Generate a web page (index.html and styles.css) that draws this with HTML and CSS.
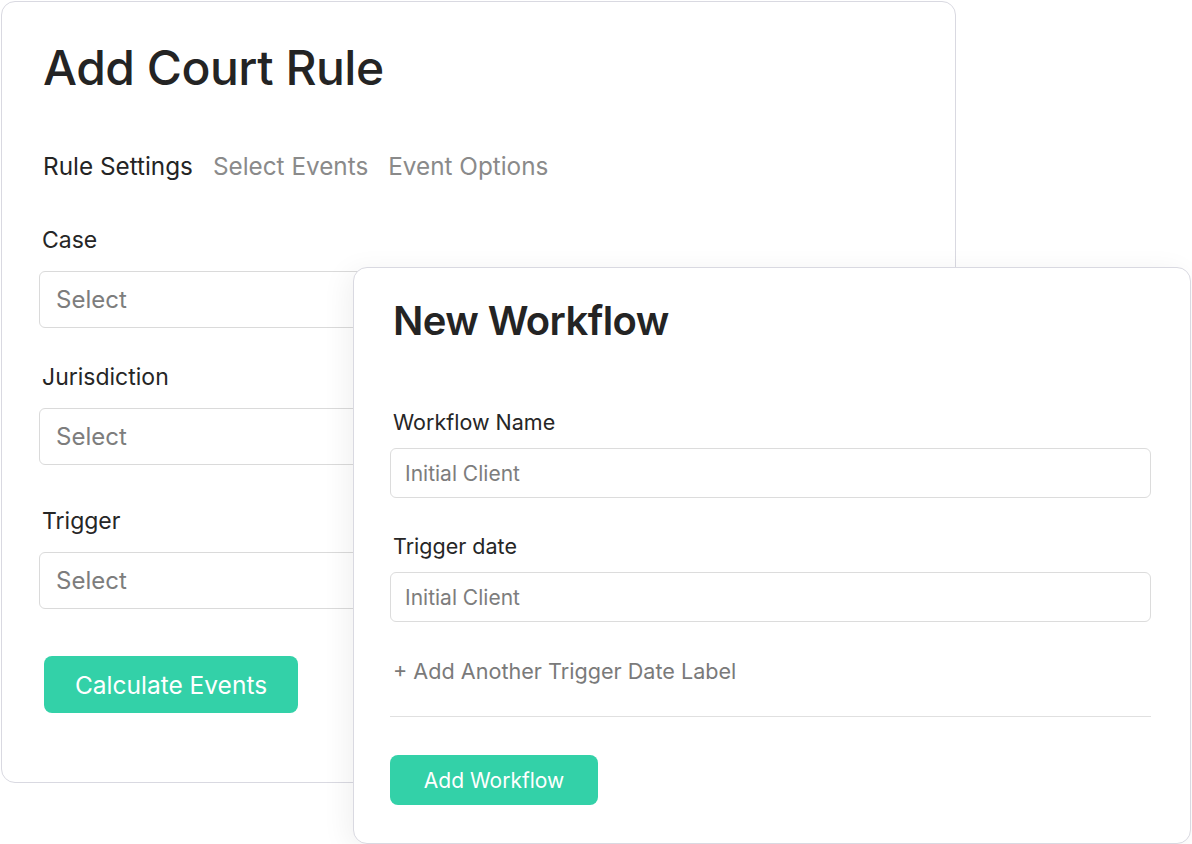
FILE: index.html
```html
<!DOCTYPE html>
<html>
<head>
<meta charset="utf-8">
<link rel="stylesheet" href="styles.css">
</head>
<body>
<div class="canvas">
  <section class="card card-rule">
    <h1 class="rule-title">Add Court Rule</h1>
    <nav class="tabs">
      <span class="tab active">Rule Settings</span>
      <span class="tab">Select Events</span>
      <span class="tab">Event Options</span>
    </nav>
    <div class="field f-case">
      <label class="lbl">Case</label>
      <div class="select">Select</div>
    </div>
    <div class="field f-jur">
      <label class="lbl">Jurisdiction</label>
      <div class="select">Select</div>
    </div>
    <div class="field f-trig">
      <label class="lbl">Trigger</label>
      <div class="select">Select</div>
    </div>
    <button class="btn btn-calc">Calculate Events</button>
  </section>

  <section class="card card-flow">
    <h2 class="flow-title">New Workflow</h2>
    <div class="wf-field wf-name">
      <label class="wf-lbl">Workflow Name</label>
      <div class="wf-input">Initial Client</div>
    </div>
    <div class="wf-field wf-date">
      <label class="wf-lbl">Trigger date</label>
      <div class="wf-input">Initial Client</div>
    </div>
    <div class="add-link">+ Add Another Trigger Date Label</div>
    <hr class="divider">
    <button class="btn btn-add">Add Workflow</button>
  </section>
</div>
</body>
</html>
```

FILE: styles.css
```css
* { box-sizing: border-box; }
html, body {
  margin: 0;
  padding: 0;
  background: #ffffff;
}
body {
  font-family: Inter, "Noto Sans", "Liberation Sans", sans-serif;
  color: #262626;
  width: 1192px;
  height: 844px;
  overflow: hidden;
}
.canvas {
  position: relative;
  width: 1192px;
  height: 844px;
}
.card {
  background: #ffffff;
  border: 1.5px solid #d9d9e1;
  border-radius: 14px;
}
.card-rule {
  margin: 1px 0 0 1px;
  width: 955px;
  height: 782px;
  padding: 37px 0 0 37px;
  display: flex;
  flex-direction: column;
  align-items: flex-start;
}
.rule-title {
  margin: 0 0 0 4px;
  font-size: 48px;
  line-height: 58px;
  font-weight: 500;
  letter-spacing: -0.5px;
  color: #242424;
}
.tabs {
  margin: 54px 0 0 4px;
  display: flex;
  gap: 20px;
  font-size: 24.3px;
  line-height: 30px;
}
.tab { color: #8a8a8a; }
.tab.active { color: #242424; }
.field {
  display: flex;
  flex-direction: column;
  align-items: flex-start;
  gap: 17px;
  width: 880px;
}
.f-case { margin-top: 45px; }
.f-jur { margin-top: 35px; }
.f-trig { margin-top: 42px; }
.lbl {
  margin-left: 3px;
  font-size: 23px;
  line-height: 28px;
  color: #262626;
}
.select {
  width: 100%;
  height: 57px;
  border: 1.5px solid #dadada;
  border-radius: 6px;
  padding: 0 16px;
  display: flex;
  align-items: center;
  font-size: 24px;
  color: #7d7d7d;
}
.btn {
  border: none;
  border-radius: 8px;
  background: #33d1a8;
  color: #ffffff;
  font-family: inherit;
  cursor: pointer;
}
.btn-calc {
  margin: 47px 0 0 5px;
  width: 254px;
  height: 57px;
  font-size: 24.5px;
}
.card-flow {
  position: absolute;
  left: 353px;
  top: 266px;
  width: 838px;
  height: 577px;
  padding: 28px 39px 0 36px;
  box-shadow: -6px 4px 28px rgba(0, 0, 0, 0.06);
  display: flex;
  flex-direction: column;
  align-items: stretch;
}
.flow-title {
  margin: 0 0 0 3px;
  font-size: 40px;
  line-height: 50px;
  font-weight: 600;
  letter-spacing: -0.6px;
  color: #242424;
}
.wf-field {
  display: flex;
  flex-direction: column;
  gap: 14px;
}
.wf-name { margin-top: 64px; }
.wf-date { margin-top: 36px; }
.wf-lbl {
  margin-left: 3px;
  font-size: 21.5px;
  line-height: 24px;
  color: #262626;
}
.wf-input {
  height: 50px;
  border: 1.5px solid #dcdcdc;
  border-radius: 6px;
  padding: 0 14px;
  display: flex;
  align-items: center;
  font-size: 21px;
  color: #7d7d7d;
}
.add-link {
  margin: 35px 0 0 3px;
  font-size: 21.6px;
  line-height: 28px;
  color: #7a7a7a;
}
.divider {
  margin: 31px 0 0 0;
  border: none;
  border-top: 1.5px solid #e0e0e0;
  height: 0;
}
.btn-add {
  align-self: flex-start;
  margin-top: 38px;
  width: 208px;
  height: 50px;
  font-size: 21px;
}
```
